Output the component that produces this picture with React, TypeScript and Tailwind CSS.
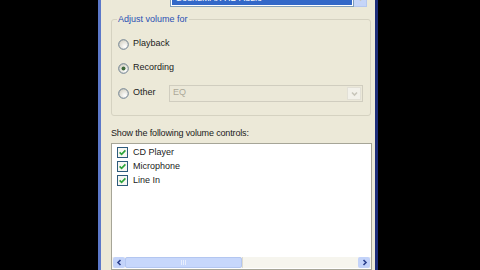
import React from "react";

function Radio({ checked }: { checked?: boolean }) {
  return (
    <svg width="11" height="11" viewBox="0 0 11 11" className="shrink-0">
      <defs>
        <radialGradient id="rg" cx="65%" cy="70%" r="70%">
          <stop offset="0%" stopColor="#ffffff" />
          <stop offset="100%" stopColor="#d6d3c6" />
        </radialGradient>
      </defs>
      <circle cx="5.5" cy="5.5" r="4.8" fill="url(#rg)" stroke="#6d7f90" strokeWidth="1" />
      {checked && <circle cx="5.5" cy="5.5" r="2" fill="#3f6a3a" />}
    </svg>
  );
}

function Check() {
  return (
    <svg width="11" height="11" viewBox="0 0 11 11" className="shrink-0">
      <rect x="0.5" y="0.5" width="10" height="10" fill="#f7f7f2" stroke="#2d5b7c" />
      <path d="M2.6 5.4 L4.6 7.4 L8.4 3.4" fill="none" stroke="#2ba53a" strokeWidth="1.6" />
    </svg>
  );
}

function Arrow({ dir }: { dir: "left" | "right" | "down" }) {
  const d =
    dir === "left" ? "M5.5 2 L3 4.5 L5.5 7" : dir === "right" ? "M3.5 2 L6 4.5 L3.5 7" : "M2 3.5 L4.5 6 L7 3.5";
  return (
    <svg width="9" height="9" viewBox="0 0 9 9">
      <path d={d} fill="none" stroke={dir === "down" ? "#c8c6bb" : "#2a3f8c"} strokeWidth="1.6" />
    </svg>
  );
}

const options = ["CD Player", "Microphone", "Line In"];

export default function App() {
  return (
    <div
      className="flex h-[270px] w-[480px] overflow-hidden bg-black text-[9px] text-[#1b1b1b]"
      style={{ fontFamily: '"Liberation Sans", Arial, sans-serif' }}
    >
      <div className="w-[98px] shrink-0 bg-black" />
      <div className="flex w-[280px] shrink-0 flex-col border-l-[3px] border-r-[3px] border-l-[#5c78c9] border-r-[#1c2c78] bg-[#ece9d8] pl-[10px] pr-[3px]">
        {/* mixer device row, cut off at the top like the reference */}
        <div className="-mt-[10px] flex h-[17px] items-stretch pl-[59px] pr-[5px]">
          <div className="flex flex-1 items-center border border-[#7f9db9] bg-white p-[1px]">
            <div className="flex h-full flex-1 items-center bg-[#3368c8] px-1 text-white">SoundMAX HD Audio</div>
          </div>
          <div className="flex w-[13px] items-center justify-center border border-l-0 border-[#b5c7ef] bg-[#c6d5f8]">
            <Arrow dir="down" />
          </div>
        </div>

        {/* adjust volume group */}
        <div className="relative mt-[12px] mr-[1px] h-[97px] rounded-[3px] border border-[#d5d2c1]">
          <span className="absolute -top-[7px] left-[5px] bg-[#ece9d8] px-[1px] text-[#2a4fb3]">Adjust volume for</span>
          <div className="flex flex-col pl-[6px] pt-[18px]">
            <div className="flex h-[12px] items-center gap-[4px]">
              <Radio />
              <span>Playback</span>
            </div>
            <div className="mt-[12px] flex h-[12px] items-center gap-[4px]">
              <Radio checked />
              <span>Recording</span>
            </div>
            <div className="mt-[13px] flex h-[12px] items-center">
              <div className="flex w-[51px] items-center gap-[4px]">
                <Radio />
                <span>Other</span>
              </div>
              <div className="mr-[7px] flex h-[17px] flex-1 items-center border border-[#d0cdbf] bg-[#ebe8d8] pl-[3px] text-[#aca899]">
                <span className="flex-1">EQ</span>
                <div className="mr-[1px] flex h-[13px] w-[14px] items-center justify-center border border-[#e2e0d6] bg-[#f2f1ea]">
                  <Arrow dir="down" />
                </div>
              </div>
            </div>
          </div>
        </div>

        <div className="mt-[11px] h-[12px] leading-[12px] tracking-[-0.15px]">Show the following volume controls:</div>

        {/* list of controls */}
        <div className="mt-[4px] flex flex-1 flex-col border border-[#a6a597] bg-white">
          <div className="flex flex-1 flex-col gap-[3px] pl-[5px] pt-[3px]">
            {options.map((o) => (
              <div key={o} className="flex h-[11px] items-center gap-[5px]">
                <Check />
                <span>{o}</span>
              </div>
            ))}
          </div>
          <div className="mb-[1px] flex h-[11px] items-stretch bg-[#f6f5ee] px-[1px]">
            <div className="flex w-[12px] items-center justify-center rounded-[2px] bg-[#c3d3f9]">
              <Arrow dir="left" />
            </div>
            <div className="flex w-[117px] items-center justify-center rounded-[2px] border border-[#b3c6f0] bg-[#c7d7fb]">
              <div className="flex gap-[1px]">
                <div className="h-[5px] w-[1px] bg-[#e8eefc]" />
                <div className="h-[5px] w-[1px] bg-[#e8eefc]" />
                <div className="h-[5px] w-[1px] bg-[#e8eefc]" />
              </div>
            </div>
            <div className="flex-1 border-l border-[#dddbd0]" />
            <div className="flex w-[12px] items-center justify-center rounded-[2px] bg-[#c3d3f9]">
              <Arrow dir="right" />
            </div>
          </div>
        </div>
      </div>
      <div className="flex-1 bg-black" />
    </div>
  );
}
